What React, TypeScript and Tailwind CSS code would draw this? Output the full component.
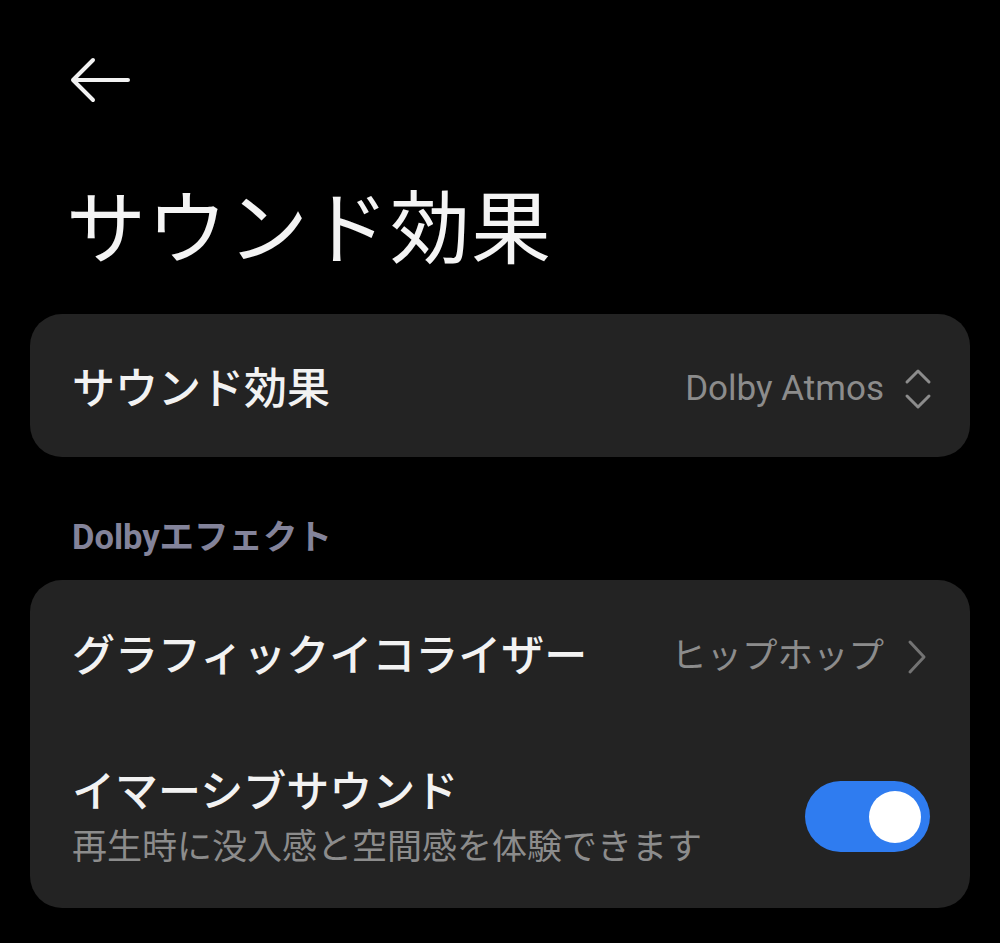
import React, { useState } from 'react';

const font = { fontFamily: 'Roboto, "Noto Sans CJK JP", sans-serif' };

const BackArrow: React.FC = () => (
  <svg width="64" height="48" viewBox="0 0 64 48" fill="none">
    <path d="M60 24H5M25 4L5 24l20 20" stroke="#f2f2f2" strokeWidth="4" strokeLinecap="round" strokeLinejoin="round" />
  </svg>
);

const UpDown: React.FC = () => (
  <svg width="28" height="44" viewBox="0 0 28 44" fill="none">
    <path d="M3 15L14 4l11 11M3 29l11 11 11-11" stroke="#8c8c8c" strokeWidth="3" strokeLinecap="round" strokeLinejoin="round" />
  </svg>
);

const ChevronRight: React.FC = () => (
  <svg width="22" height="36" viewBox="0 0 22 36" fill="none">
    <path d="M4 3l14 15L4 33" stroke="#737373" strokeWidth="3" strokeLinecap="round" strokeLinejoin="round" />
  </svg>
);

export default function App() {
  const [immersive, setImmersive] = useState(true);

  return (
    <div className="w-[1000px] h-[943px] bg-black text-white overflow-hidden" style={font}>
      <div className="pt-[56px] pl-[68px]">
        <BackArrow />
      </div>
      <h1 className="pl-[66px] mt-[86px] text-[80px] leading-[80px] font-normal text-[#f4f4f4] tracking-[1px]">
        サウンド効果
      </h1>

      {/* sound effect picker */}
      <div className="mx-[30px] mt-[44px] h-[143px] rounded-[32px] bg-[#232323] flex items-center pl-[42px] pr-[38px] pt-[7px]">
        <span className="text-[43px] font-medium text-[#f2f2f2]">サウンド効果</span>
        <div className="ml-auto flex items-center gap-[20px]">
          <span className="text-[35px] text-[#8c8c8c]">Dolby Atmos</span>
          <UpDown />
        </div>
      </div>

      <div className="pl-[72px] mt-[60px] text-[34.5px] leading-[40px] font-bold text-[#83839a]">
        Dolbyエフェクト
      </div>

      <div className="mx-[30px] mt-[23px] h-[328px] rounded-[32px] bg-[#232323] flex flex-col">
        <div className="h-[150px] flex items-center pl-[42px] pr-[42px] pt-[3px]">
          <span className="text-[43px] font-medium text-[#f2f2f2]">グラフィックイコライザー</span>
          <div className="ml-auto flex items-center gap-[22px]">
            <span className="text-[35.5px] text-[#8c8c8c]">ヒップホップ</span>
            <ChevronRight />
          </div>
        </div>
        <div className="flex pl-[42px] pr-[40px] pt-[36px]">
          <div className="flex flex-col">
            <span className="text-[43px] leading-[52px] font-medium text-[#f2f2f2]">イマーシブサウンド</span>
            <span className="text-[35px] leading-[60px] text-[#8c8c8c]">再生時に没入感と空間感を体験できます</span>
          </div>
          <button
            type="button"
            onClick={() => setImmersive(!immersive)}
            className={`ml-auto mt-[15px] w-[125px] h-[71px] rounded-full flex items-center px-[9px] ${
              immersive ? 'bg-[#2f7cf0] justify-end' : 'bg-[#555] justify-start'
            }`}
          >
            <span className="w-[52px] h-[52px] rounded-full bg-white" />
          </button>
        </div>
      </div>
    </div>
  );
}
